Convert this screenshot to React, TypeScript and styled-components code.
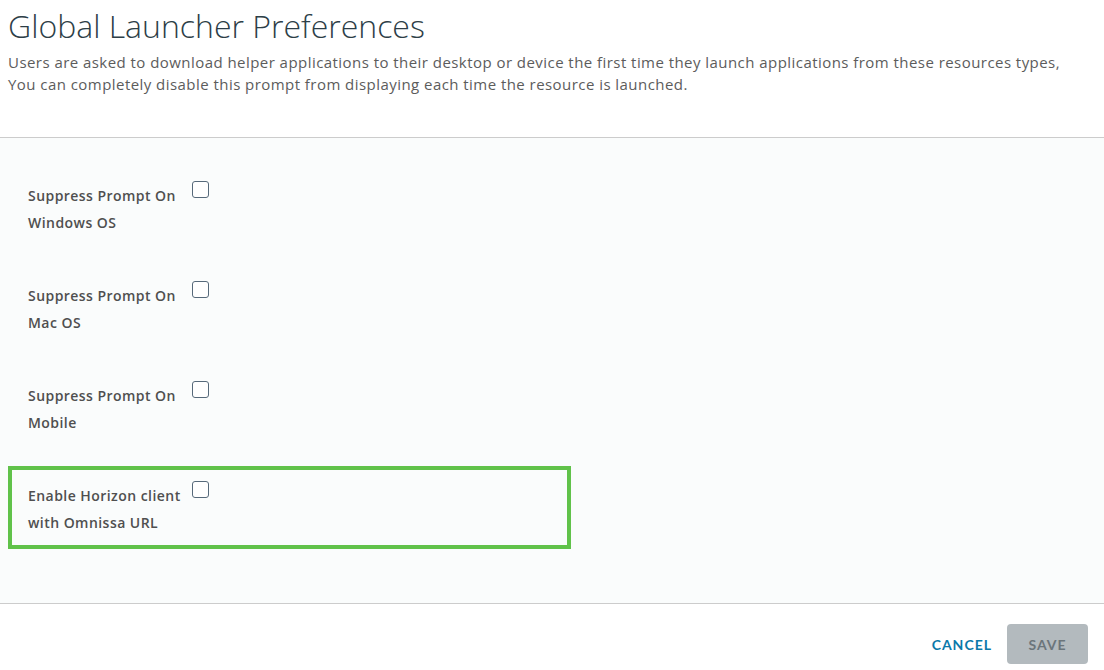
import styled, { createGlobalStyle } from 'styled-components';

const GlobalStyle = createGlobalStyle`
  html, body {
    margin: 0;
    padding: 0;
    background: #ffffff;
  }
  body {
    font-family: 'Open Sans', 'Noto Sans', sans-serif;
  }
`;

const Page = styled.div`
  width: 1104px;
  height: 670px;
  display: flex;
  flex-direction: column;
  overflow: hidden;
`;

const Header = styled.header`
  padding: 6px 8px 0 8px;
  height: 138px;
  box-sizing: border-box;
  border-bottom: 1px solid #cccccc;
  flex-shrink: 0;
`;

const Title = styled.h1`
  margin: 0;
  font-size: 32px;
  line-height: 40px;
  font-weight: 300;
  color: #2d3e47;
`;

const Description = styled.p`
  margin: 5px 0 0 0;
  font-size: 15px;
  line-height: 22px;
  letter-spacing: 0.45px;
  color: #5c5c5c;
`;

const Body = styled.main`
  flex: 1;
  background: #fafcfc;
  padding: 28px 0 0 0;
  border-bottom: 1px solid #cccccc;
  display: flex;
  flex-direction: column;
  gap: 17px;
`;

const Row = styled.div<{ $highlighted?: boolean }>`
  width: 563px;
  height: 83px;
  box-sizing: border-box;
  margin-left: 8px;
  padding: 12px 16px;
  border: 4px solid ${({ $highlighted }) => ($highlighted ? '#60c24a' : 'transparent')};
  display: flex;
  align-items: flex-start;
`;

const Label = styled.label`
  width: 158px;
  margin-right: 6px;
  font-size: 14px;
  font-weight: 600;
  line-height: 27px;
  letter-spacing: 0.45px;
  color: #4f4f4f;
`;

const Checkbox = styled.span`
  width: 17px;
  height: 17px;
  margin-top: -1px;
  box-sizing: border-box;
  border: 1px solid #56697a;
  border-radius: 3px;
  background: #ffffff;
`;

const Footer = styled.footer`
  height: 66px;
  flex-shrink: 0;
  display: flex;
  align-items: flex-start;
  justify-content: flex-end;
  padding: 20px 16px 0 0;
  box-sizing: border-box;
  gap: 3px;
`;

const Button = styled.button<{ $variant: 'link' | 'disabled' }>`
  height: 40px;
  padding: 0 12px;
  border: none;
  border-radius: 4px;
  font-family: 'Lato', 'Noto Sans', sans-serif;
  font-size: 14px;
  font-weight: 700;
  letter-spacing: 1px;
  text-transform: uppercase;
  background: ${({ $variant }) => ($variant === 'disabled' ? '#b3babe' : 'transparent')};
  color: ${({ $variant }) => ($variant === 'disabled' ? '#6b757b' : '#0a79aa')};
  min-width: ${({ $variant }) => ($variant === 'disabled' ? '81px' : 'auto')};
`;

const options = [
  { label: 'Suppress Prompt On Windows OS' },
  { label: 'Suppress Prompt On Mac OS' },
  { label: 'Suppress Prompt On Mobile' },
  { label: 'Enable Horizon client with Omnissa URL', highlighted: true },
];

export default function App() {
  return (
    <Page>
      <GlobalStyle />
      <Header>
        <Title>Global Launcher Preferences</Title>
        <Description>
          Users are asked to download helper applications to their desktop or device the first time they launch applications from these resources types,
          <br />
          You can completely disable this prompt from displaying each time the resource is launched.
        </Description>
      </Header>
      <Body>
        {options.map(o => (
          <Row key={o.label} $highlighted={o.highlighted}>
            <Label>{o.label}</Label>
            <Checkbox role="checkbox" aria-checked="false" />
          </Row>
        ))}
      </Body>
      <Footer>
        <Button $variant="link">Cancel</Button>
        <Button $variant="disabled" disabled>Save</Button>
      </Footer>
    </Page>
  );
}
